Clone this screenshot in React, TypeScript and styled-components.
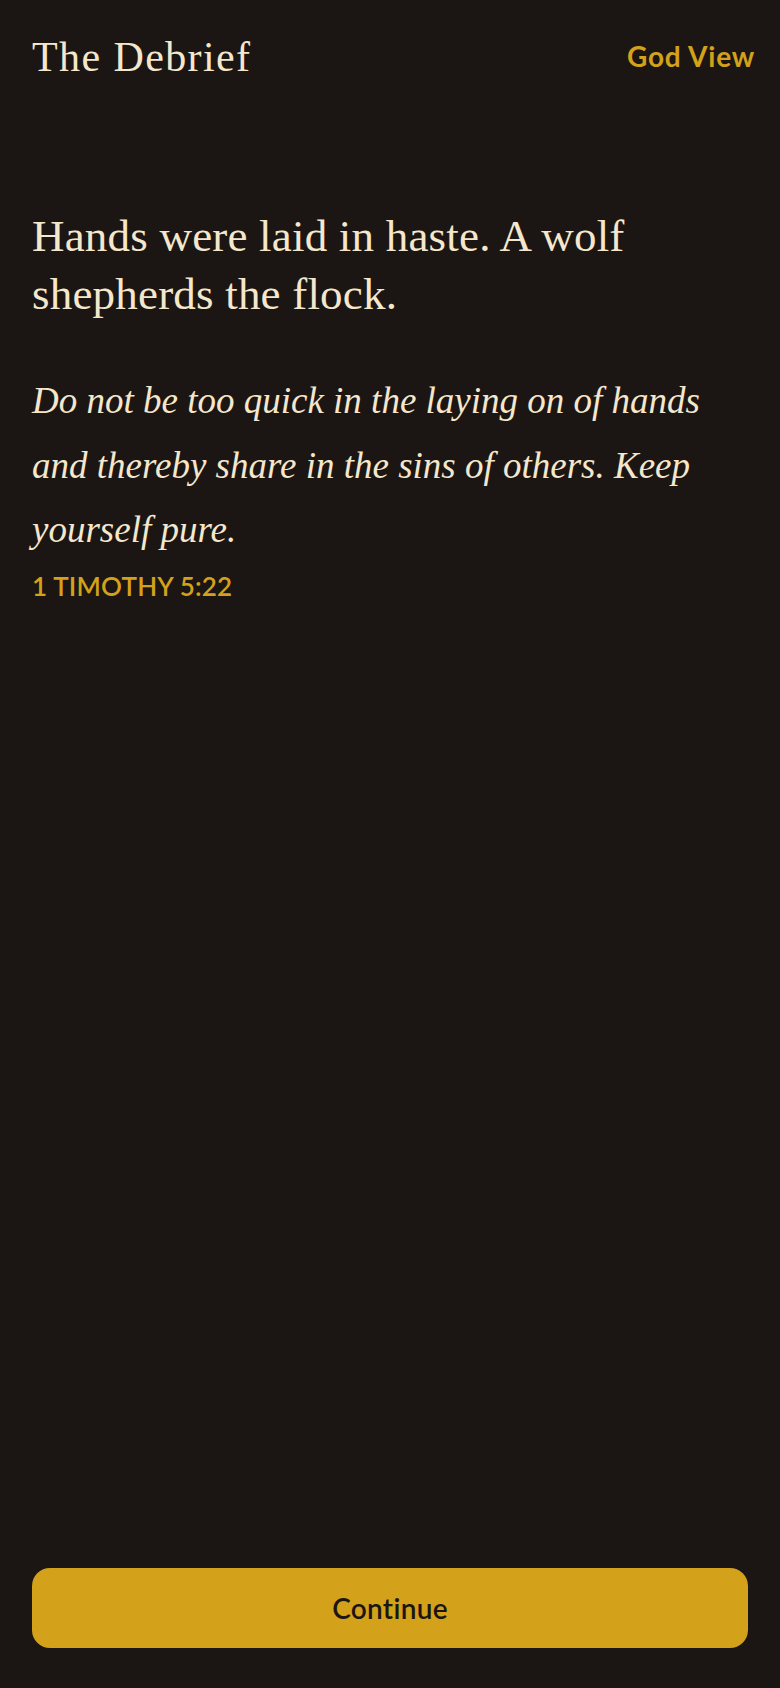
import { FC } from 'react'
import styled, { createGlobalStyle } from 'styled-components'

const COLORS = {
    bg: '#1b1614',
    cream: '#f5e7cb',
    gold: '#d4a11a',
    ink: '#1b1614',
}

const SERIF = `'Liberation Serif', 'DejaVu Serif', serif`
const SANS = `Lato, 'Noto Sans', sans-serif`

const GlobalStyle = createGlobalStyle`
    html, body {
        margin: 0;
        padding: 0;
        background: ${COLORS.bg};
    }
    * {
        box-sizing: border-box;
    }
`

const Page = styled.div`
    display: flex;
    flex-direction: column;
    min-height: 100vh;
    padding: 32px 32px 40px;
    background: ${COLORS.bg};
    color: ${COLORS.cream};
`

const Header = styled.header`
    display: flex;
    align-items: center;
    justify-content: space-between;
    margin-right: -7px;
`

const AppTitle = styled.h1`
    margin: 0;
    font-family: ${SERIF};
    font-size: 42px;
    font-weight: 400;
    line-height: 1.2;
    letter-spacing: 1.4px;
    color: ${COLORS.cream};
`

const LinkButton = styled.button`
    border: 0;
    padding: 0;
    background: none;
    cursor: pointer;
    font-family: ${SANS};
    font-size: 28px;
    font-weight: 700;
    line-height: 1.2;
    letter-spacing: 0.8px;
    color: ${COLORS.gold};
`

const Content = styled.main`
    display: flex;
    flex-direction: column;
    margin-top: 125px;
`

const Headline = styled.h2`
    margin: 0;
    font-family: ${SERIF};
    font-size: 45px;
    font-weight: 400;
    line-height: 58px;
    letter-spacing: 0.2px;
    color: ${COLORS.cream};
`

const Verse = styled.p`
    margin: 46px 0 0;
    font-family: ${SERIF};
    font-size: 37px;
    font-style: italic;
    line-height: 64.5px;
    color: ${COLORS.cream};
`

const Reference = styled.span`
    margin-top: 8px;
    font-family: ${SANS};
    font-size: 26px;
    font-weight: 600;
    line-height: 1.2;
    letter-spacing: 0.2px;
    text-transform: uppercase;
    color: ${COLORS.gold};
`

const Footer = styled.footer`
    display: flex;
    margin-top: auto;
`

type TPrimaryButton = {
    label: string
}

const StyledPrimary = styled.button`
    flex: 1;
    height: 80px;
    border: 0;
    border-radius: 18px;
    background: ${COLORS.gold};
    cursor: pointer;
    font-family: ${SANS};
    font-size: 28px;
    font-weight: 600;
    letter-spacing: 0.3px;
    color: ${COLORS.ink};
`

const PrimaryButton: FC<TPrimaryButton> = ({ label }) => <StyledPrimary type="button">{label}</StyledPrimary>

export default function App() {
    return (
        <>
            <GlobalStyle />
            <Page>
                <Header>
                    <AppTitle>The Debrief</AppTitle>
                    <LinkButton type="button">God View</LinkButton>
                </Header>
                <Content>
                    <Headline>Hands were laid in haste. A wolf shepherds the flock.</Headline>
                    <Verse>
                        Do not be too quick in the laying on of hands and thereby share in the sins of others. Keep
                        yourself pure.
                    </Verse>
                    <Reference>1 Timothy 5:22</Reference>
                </Content>
                <Footer>
                    <PrimaryButton label="Continue" />
                </Footer>
            </Page>
        </>
    )
}
